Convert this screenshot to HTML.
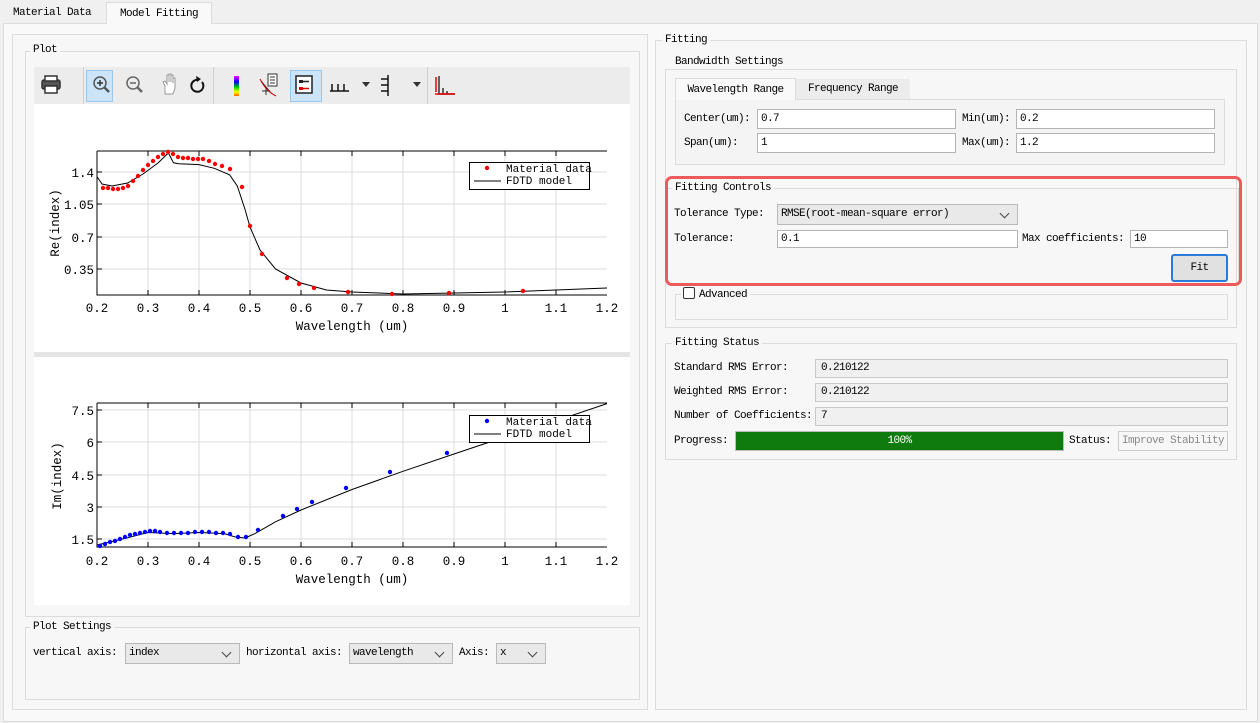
<!DOCTYPE html>
<html><head><meta charset="utf-8"><style>
*{box-sizing:border-box;margin:0;padding:0}
body{width:1260px;height:723px;background:#f0f0f0;font-family:"Liberation Mono","Noto Sans CJK SC",monospace;font-size:11px;letter-spacing:-0.6px;color:#000;position:relative;overflow:hidden}
.a{position:absolute}
.box{position:absolute;border:1px solid #dcdcdc}
.lbl{position:absolute;background:#f7f7f7;padding:0 3px;line-height:12px}
.inp{position:absolute;background:#fff;border:1px solid #b4b4b4;height:20px;line-height:18px;padding-left:3px}
.ro{position:absolute;background:#f0f0f0;border:1px solid #c8c8c8;height:19px;line-height:17px;padding-left:5px}
.cb{position:absolute;background:#e9e9e9;border:1px solid #b9b9b9;height:21px;line-height:19px;padding-left:3px}
.cb:after{content:"";position:absolute;right:9px;top:5px;width:6px;height:6px;border-right:1.2px solid #444;border-bottom:1.2px solid #444;transform:rotate(45deg)}
svg text{font-family:"Liberation Mono",monospace;letter-spacing:0}
</style></head><body>
<!-- tabs -->
<div class="a" style="left:0;top:0;width:106px;height:22px;line-height:26px;padding-left:13px">Material Data</div>
<div class="a" style="left:106px;top:2px;width:106px;height:22px;background:#f9f9f9;border:1px solid #dcdcdc;border-bottom:none;line-height:22px;text-align:center;z-index:2">Model Fitting</div>
<div class="a" style="left:3px;top:23px;width:1255px;height:699px;background:#f9f9f9;border:1px solid #dcdcdc"></div>
<!-- left panel -->
<div class="a" style="left:12px;top:34px;width:636px;height:676px;background:#f7f7f7;border:1px solid #dcdcdc"></div>
<div class="box" style="left:25px;top:51px;width:615px;height:566px"></div>
<div class="lbl" style="left:30px;top:44px">Plot</div>
<!-- toolbar -->
<div class="a" style="left:34px;top:67px;width:596px;height:37px;background:#ececec"></div>
<div class="a" style="left:83px;top:67px;width:1px;height:37px;background:#d0d0d0"></div>
<div class="a" style="left:213px;top:67px;width:1px;height:37px;background:#d0d0d0"></div>
<div class="a" style="left:427px;top:67px;width:1px;height:37px;background:#d0d0d0"></div>
<div class="a" style="left:86px;top:70px;width:27px;height:32px;background:#cce4f7;border:1px solid #99c9ef"></div>
<div class="a" style="left:290px;top:70px;width:32px;height:32px;background:#cce4f7;border:1px solid #99c9ef"></div>
<svg class="a" style="left:34px;top:67px" width="596" height="37">
<g fill="none" stroke="#333" stroke-width="1.5">
<rect x="8" y="13" width="18" height="9" rx="2" fill="#555"/><rect x="11" y="9" width="12" height="5" fill="#fff"/><rect x="11" y="19" width="12" height="7" fill="#fff"/>
<circle cx="66" cy="16" r="6" stroke="#555"/><line x1="70" y1="20" x2="75" y2="25" stroke-width="2.5" stroke="#555"/><path d="M63 16h6M66 13v6"/>
<circle cx="99" cy="16" r="6" stroke="#666"/><line x1="103" y1="20" x2="108" y2="25" stroke-width="2.5" stroke="#666"/><path d="M96 16h6" stroke="#666"/>
<path d="M131 27v-8l-2-4 2-1 2 3v-9h2v7v-8h2v8v-7h2v8v-5h2v10l-2 6z" stroke="#999" stroke-width="1" fill="#fff"/>
<path d="M165 13a6 6 0 1 0 3 2" stroke="#111" stroke-width="2"/><path d="M162 9l5 3-4 3z" fill="#111" stroke="none"/>
</g>
<defs><linearGradient id="rb" x1="0" y1="0" x2="0" y2="1"><stop offset="0" stop-color="#f0f"/><stop offset=".3" stop-color="#00f"/><stop offset=".55" stop-color="#0c0"/><stop offset=".8" stop-color="#ff0"/><stop offset="1" stop-color="#f60"/></linearGradient></defs>
<rect x="200" y="9" width="5" height="20" fill="url(#rb)"/>
<rect x="234" y="7" width="9" height="12" fill="#fff" stroke="#333"/><path d="M236 10h5M236 13h5M236 16h5M227 14l10 12M232 20v8M228 24h8" stroke="#333" fill="none"/><path d="M226 12q6 12 16 17" stroke="#c00" fill="none"/>
<rect x="262" y="9" width="16" height="17" fill="#fff" stroke="#222" stroke-width="1.5"/><rect x="265" y="13" width="4" height="3" fill="#222"/><path d="M269 14.5h6" stroke="#222" stroke-width="1.5"/><rect x="265" y="20" width="4" height="3" fill="#d00"/><path d="M269 21.5h6" stroke="#d00" stroke-width="1.5"/>
<path d="M296 24h19M298 24v-7M304 24v-7M310 24v-7" stroke="#111" stroke-width="1.5" fill="none"/><path d="M328 15h8l-4 5z" fill="#333"/>
<path d="M354 8v21M347 12h7M347 18h7M347 24h7" stroke="#111" stroke-width="1.5" fill="none"/><path d="M379 15h8l-4 5z" fill="#333"/>
<path d="M405 9v18h16M409 21v6M413 24v3" stroke="#333" stroke-width="1.5" fill="none"/><path d="M402 10v15M401 27h20" stroke="#e00" stroke-width="1.5"/>
</svg>
<!-- plots -->
<div class="a" style="left:34px;top:104px;width:596px;height:248px;background:#fff"></div>
<div class="a" style="left:34px;top:352px;width:596px;height:5px;background:#e4e4e4"></div>
<div class="a" style="left:34px;top:357px;width:596px;height:248px;background:#fff"></div>
<svg class="a" style="left:0;top:0" width="640" height="610" font-size="12.5">
<g stroke="#dcdcdc" stroke-width="1">
<path d="M148 151v144M199 151v144M250 151v144M301 151v144M352 151v144M403 151v144M454 151v144M505 151v144M556 151v144M97 172h510M97 204h510M97 237h510M97 269h510"/>
<path d="M148 403v144M199 403v144M250 403v144M301 403v144M352 403v144M403 403v144M454 403v144M505 403v144M556 403v144M97 410h510M97 442h510M97 475h510M97 507h510M97 539h510"/>
</g>
<g stroke="#000" fill="none">
<path d="M97 151V295H607M97 151H607"/>
<path d="M148 151v5M199 151v5M250 151v5M301 151v5M352 151v5M403 151v5M454 151v5M505 151v5M556 151v5M148 295v-5M199 295v-5M250 295v-5M301 295v-5M352 295v-5M403 295v-5M454 295v-5M505 295v-5M556 295v-5M97 172h5M97 204h5M97 237h5M97 269h5"/>
<path d="M97 403V547H607M97 403H607"/>
<path d="M148 403v5M199 403v5M250 403v5M301 403v5M352 403v5M403 403v5M454 403v5M505 403v5M556 403v5M148 547v-5M199 547v-5M250 547v-5M301 547v-5M352 547v-5M403 547v-5M454 547v-5M505 547v-5M556 547v-5M97 410h5M97 442h5M97 475h5M97 507h5M97 539h5"/>
<polyline points="97,176.6 102,184 112,186 127.6,183 143,174 158,163 168.4,153 173.5,162.8 178.6,163.7 199,164.6 214.3,168.3 229.6,174.8 237.3,186 244.9,209 250,227 260,250 275.5,269 301,283 326.5,290 352,292 403,294 454,293 505,292 607,288"/>
<polyline points="97,545 122.5,539 148,532.5 173.5,533.6 199,532.5 224.5,533.6 234.7,536.9 245,538 255,533.6 275.5,521.8 301,510 352,489.5 403,471.3 454,454 505,436.9 556,420.8 607,403.6"/>
</g>
<g fill="#f00">
<circle cx="103" cy="188" r="2.2"/><circle cx="108" cy="188" r="2.2"/><circle cx="113" cy="189" r="2.2"/><circle cx="118" cy="189" r="2.2"/><circle cx="123" cy="188" r="2.2"/><circle cx="128" cy="186" r="2.2"/><circle cx="133" cy="181" r="2.2"/><circle cx="138" cy="176" r="2.2"/><circle cx="143" cy="170" r="2.2"/><circle cx="148" cy="165" r="2.2"/><circle cx="153" cy="161" r="2.2"/><circle cx="158" cy="157" r="2.2"/><circle cx="163" cy="154" r="2.2"/><circle cx="168" cy="152" r="2.2"/><circle cx="173" cy="154" r="2.2"/><circle cx="178" cy="157" r="2.2"/><circle cx="183" cy="158" r="2.2"/><circle cx="188" cy="158" r="2.2"/><circle cx="193" cy="159" r="2.2"/><circle cx="198" cy="159" r="2.2"/><circle cx="203" cy="159" r="2.2"/><circle cx="209" cy="161" r="2.2"/><circle cx="215" cy="164" r="2.2"/><circle cx="222" cy="166" r="2.2"/><circle cx="230" cy="169" r="2.2"/><circle cx="242" cy="187" r="2.2"/><circle cx="250" cy="226" r="2.2"/><circle cx="262" cy="254" r="2.2"/><circle cx="287" cy="278" r="2.2"/><circle cx="299" cy="284" r="2.2"/><circle cx="314" cy="288" r="2.2"/><circle cx="348" cy="292" r="2.2"/><circle cx="392" cy="294" r="2.2"/><circle cx="449" cy="293" r="2.2"/><circle cx="523" cy="291" r="2.2"/>
</g>
<g fill="#00f">
<circle cx="100" cy="546" r="2.2"/><circle cx="105" cy="544" r="2.2"/><circle cx="110" cy="542" r="2.2"/><circle cx="115" cy="541" r="2.2"/><circle cx="120" cy="539" r="2.2"/><circle cx="125" cy="537" r="2.2"/><circle cx="130" cy="535" r="2.2"/><circle cx="135" cy="534" r="2.2"/><circle cx="140" cy="533" r="2.2"/><circle cx="145" cy="532" r="2.2"/><circle cx="150" cy="531" r="2.2"/><circle cx="155" cy="531" r="2.2"/><circle cx="160" cy="532" r="2.2"/><circle cx="167" cy="533" r="2.2"/><circle cx="174" cy="533" r="2.2"/><circle cx="181" cy="533" r="2.2"/><circle cx="188" cy="533" r="2.2"/><circle cx="195" cy="532" r="2.2"/><circle cx="202" cy="532" r="2.2"/><circle cx="209" cy="532" r="2.2"/><circle cx="216" cy="533" r="2.2"/><circle cx="223" cy="533" r="2.2"/><circle cx="230" cy="534" r="2.2"/><circle cx="238" cy="537" r="2.2"/><circle cx="246" cy="537" r="2.2"/><circle cx="258" cy="530" r="2.2"/><circle cx="283" cy="516" r="2.2"/><circle cx="297" cy="509" r="2.2"/><circle cx="312" cy="502" r="2.2"/><circle cx="346" cy="488" r="2.2"/><circle cx="390" cy="472" r="2.2"/><circle cx="447" cy="453" r="2.2"/><circle cx="509" cy="435" r="2.2"/>
</g>
<g text-anchor="middle">
<text x="97" y="312">0.2</text><text x="148" y="312">0.3</text><text x="199" y="312">0.4</text><text x="250" y="312">0.5</text><text x="301" y="312">0.6</text><text x="352" y="312">0.7</text><text x="403" y="312">0.8</text><text x="454" y="312">0.9</text><text x="505" y="312">1</text><text x="556" y="312">1.1</text><text x="607" y="312">1.2</text>
<text x="352" y="330">Wavelength (um)</text>
<text x="97" y="565">0.2</text><text x="148" y="565">0.3</text><text x="199" y="565">0.4</text><text x="250" y="565">0.5</text><text x="301" y="565">0.6</text><text x="352" y="565">0.7</text><text x="403" y="565">0.8</text><text x="454" y="565">0.9</text><text x="505" y="565">1</text><text x="556" y="565">1.1</text><text x="607" y="565">1.2</text>
<text x="352" y="583">Wavelength (um)</text>
<text transform="translate(59,223) rotate(-90)">Re(index)</text>
<text transform="translate(61,476) rotate(-90)">Im(index)</text>
</g>
<g text-anchor="end">
<text x="94" y="177">1.4</text><text x="94" y="209">1.05</text><text x="94" y="242">0.7</text><text x="94" y="274">0.35</text>
<text x="94" y="415">7.5</text><text x="94" y="447">6</text><text x="94" y="480">4.5</text><text x="94" y="512">3</text><text x="94" y="544">1.5</text>
</g>
<g font-size="11">
<rect x="469.5" y="162.5" width="120" height="27" fill="#fff" stroke="#000"/><circle cx="487" cy="168" r="2.2" fill="#f00"/><line x1="474" y1="181" x2="501" y2="181" stroke="#000"/><text x="506" y="172">Material data</text><text x="506" y="184">FDTD model</text>
<rect x="469.5" y="415.5" width="120" height="27" fill="#fff" stroke="#000"/><circle cx="487" cy="421" r="2.2" fill="#00f"/><line x1="474" y1="434" x2="501" y2="434" stroke="#000"/><text x="506" y="425">Material data</text><text x="506" y="437">FDTD model</text>
</g>
</svg>
<!-- plot settings -->
<div class="box" style="left:25px;top:627px;width:615px;height:73px"></div>
<div class="lbl" style="left:30px;top:621px">Plot Settings</div>
<div class="a" style="left:33px;top:647px">vertical axis:</div>
<div class="cb" style="left:125px;top:643px;width:115px">index</div>
<div class="a" style="left:246px;top:647px">horizontal axis:</div>
<div class="cb" style="left:349px;top:643px;width:104px">wavelength</div>
<div class="a" style="left:459px;top:647px">Axis:</div>
<div class="cb" style="left:496px;top:643px;width:50px">x</div>
<!-- right panel -->
<div class="box" style="left:655px;top:40px;width:592px;height:670px;background:#f7f7f7"></div>
<div class="lbl" style="left:662px;top:34px">Fitting</div>
<div class="box" style="left:665px;top:69px;width:572px;height:259px"></div>
<div class="lbl" style="left:672px;top:56px">Bandwidth Settings</div>
<div class="a" style="left:675px;top:99px;width:550px;height:66px;border:1px solid #dcdcdc;background:#f4f4f4"></div>
<div class="a" style="left:675px;top:78px;width:121px;height:22px;background:#f9f9f9;border:1px solid #dcdcdc;border-bottom:none;line-height:22px;text-align:center">Wavelength Range</div>
<div class="a" style="left:796px;top:79px;width:114px;height:20px;background:#ececec;line-height:20px;text-align:center">Frequency Range</div>
<div class="a" style="left:684px;top:113px">Center(um):</div>
<div class="inp" style="left:757px;top:109px;width:199px">0.7</div>
<div class="a" style="left:962px;top:113px">Min(um):</div>
<div class="inp" style="left:1016px;top:109px;width:199px">0.2</div>
<div class="a" style="left:684px;top:137px">Span(um):</div>
<div class="inp" style="left:757px;top:133px;width:199px">1</div>
<div class="a" style="left:962px;top:137px">Max(um):</div>
<div class="inp" style="left:1016px;top:133px;width:199px">1.2</div>
<!-- fitting controls -->
<div class="box" style="left:667px;top:188px;width:572px;height:96px"></div>
<div class="lbl" style="left:672px;top:182px">Fitting Controls</div>
<div class="a" style="left:674px;top:208px">Tolerance Type:</div>
<div class="cb" style="left:777px;top:204px;width:241px">RMSE(root-mean-square error)</div>
<div class="a" style="left:674px;top:233px">Tolerance:</div>
<div class="inp" style="left:777px;top:230px;width:241px;height:18px;line-height:16px">0.1</div>
<div class="a" style="left:1022px;top:233px">Max coefficients:</div>
<div class="inp" style="left:1130px;top:230px;width:98px;height:18px;line-height:16px">10</div>
<div class="a" style="left:1171px;top:254px;width:57px;height:28px;border:2px solid #2a7ad9;border-radius:3px;background:#e1e1e1;text-align:center;line-height:24px">Fit</div>
<div class="a" style="left:665px;top:176px;width:577px;height:110px;border:3px solid #ec5a5a;border-radius:7px"></div>
<div class="box" style="left:675px;top:294px;width:553px;height:26px"></div>
<div class="a" style="left:681px;top:287px;background:#f7f7f7;padding:0 3px 0 2px;line-height:14px"><span style="display:inline-block;width:12px;height:12px;border:1px solid #333;border-radius:2px;background:#fff;vertical-align:-2px;margin-right:4px"></span>Advanced</div>
<!-- status -->
<div class="box" style="left:665px;top:343px;width:572px;height:117px"></div>
<div class="lbl" style="left:672px;top:337px">Fitting Status</div>
<div class="a" style="left:674px;top:362px">Standard RMS Error:</div>
<div class="ro" style="left:815px;top:359px;width:413px">0.210122</div>
<div class="a" style="left:674px;top:386px">Weighted RMS Error:</div>
<div class="ro" style="left:815px;top:383px;width:413px">0.210122</div>
<div class="a" style="left:674px;top:410px">Number of Coefficients:</div>
<div class="ro" style="left:815px;top:407px;width:413px">7</div>
<div class="a" style="left:674px;top:435px">Progress:</div>
<div class="a" style="left:735px;top:431px;width:329px;height:20px;background:#0f7b0f;border:1px solid #bcbcbc;color:#fff;text-align:center;line-height:18px">100%</div>
<div class="a" style="left:1069px;top:435px">Status:</div>
<div class="a" style="left:1118px;top:431px;width:110px;height:20px;border:1px solid #ccc;background:#f7f7f7;color:#888;line-height:18px;padding-left:3px">Improve Stability</div>
</body></html>
